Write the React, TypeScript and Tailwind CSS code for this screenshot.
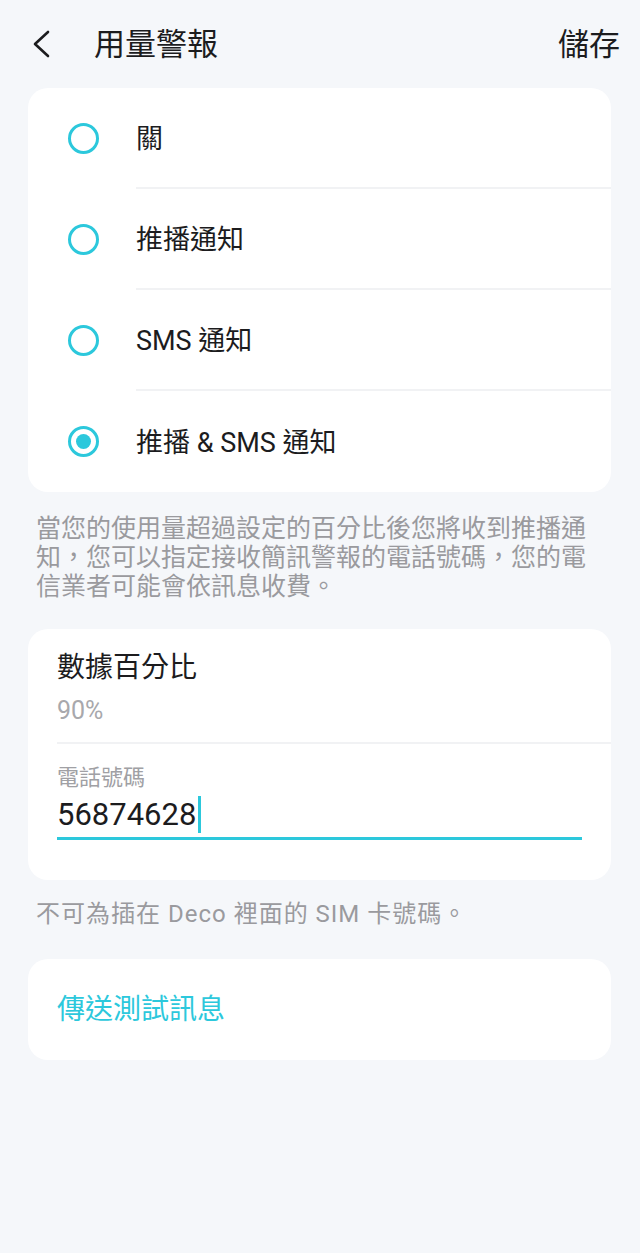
import { useState } from "react";

type Option = {
  id: string;
  label: string;
};

const options: Option[] = [
  { id: "off", label: "關" },
  { id: "push", label: "推播通知" },
  { id: "sms", label: "SMS 通知" },
  { id: "both", label: "推播 & SMS 通知" },
];

function Radio({ checked }: { checked: boolean }) {
  return (
    <div className="flex h-[31px] w-[31px] shrink-0 items-center justify-center rounded-full border-[3px] border-[#2cc8dc]">
      {checked && <div className="h-[15px] w-[15px] rounded-full bg-[#2cc8dc]" />}
    </div>
  );
}

export default function App() {
  const [selected, setSelected] = useState("both");

  return (
    <div
      className="min-h-[1253px] w-full bg-[#f5f7fa] text-[#1c1c1e]"
      style={{ fontFamily: 'Roboto, "Noto Sans CJK TC", sans-serif' }}
    >
      {/* header */}
      <div className="flex h-[88px] items-center pl-[31px] pr-[20px]">
        <svg width="20" height="28" viewBox="0 0 20 28" fill="none">
          <path
            d="M17 2 L4 14 L17 26"
            stroke="#1c1c1e"
            strokeWidth="2.6"
            strokeLinecap="round"
            strokeLinejoin="round"
          />
        </svg>
        <h1 className="ml-[43px] text-[31px] leading-none">用量警報</h1>
        <button type="button" className="ml-auto text-[31px] leading-none">
          儲存
        </button>
      </div>

      <div className="pl-[28px] pr-[29px]">
        {/* options */}
        <div className="overflow-hidden rounded-[20px] bg-white">
          {options.map((option, index) => (
            <button
              type="button"
              key={option.id}
              onClick={() => setSelected(option.id)}
              className="flex h-[101px] w-full items-stretch text-left"
            >
              <div className="flex w-[108px] shrink-0 items-center justify-center pl-[2px]">
                <Radio checked={selected === option.id} />
              </div>
              <div
                className={`flex flex-1 items-center pt-[3px] text-[27px] ${
                  index < options.length - 1 ? "border-b-2 border-[#f1f2f4]" : ""
                }`}
              >
                {option.label}
              </div>
            </button>
          ))}
        </div>

        <p className="mt-[22px] pl-[8px] pr-[20px] text-[25px] leading-[29px] text-[#9a9a9e]">
          當您的使用量超過設定的百分比後您將收到推播通知，您可以指定接收簡訊警報的電話號碼，您的電信業者可能會依訊息收費。
        </p>

        {/* percentage + phone */}
        <div className="mt-[28px] rounded-[20px] bg-white pb-[40px] pt-[20px]">
          <div className="ml-[29px] border-b-2 border-[#f1f2f4] pb-[16px]">
            <div className="text-[28px] leading-[38px]">數據百分比</div>
            <div className="mt-[9px] text-[25px] leading-[30px] text-[#a8a8ac]">90%</div>
          </div>
          <div className="mx-[29px] mt-[21px]">
            <div className="text-[22px] leading-[26px] text-[#a0a0a4]">電話號碼</div>
            <div className="flex h-[49px] items-center border-b-[3px] border-[#2cc8dc]">
              <span className="text-[31px] leading-none">56874628</span>
              <span className="ml-[2px] h-[37px] w-[3px] bg-[#2cc8dc]" />
            </div>
          </div>
        </div>

        <p className="mt-[20px] pl-[8px] text-[24px] leading-[29px] tracking-[1px] text-[#9a9a9e]">
          不可為插在 Deco 裡面的 SIM 卡號碼。
        </p>

        {/* send test */}
        <div className="mt-[30px] flex h-[101px] items-center rounded-[20px] bg-white px-[29px]">
          <span className="text-[28px] text-[#2cc8dc]">傳送測試訊息</span>
        </div>
      </div>
    </div>
  );
}
